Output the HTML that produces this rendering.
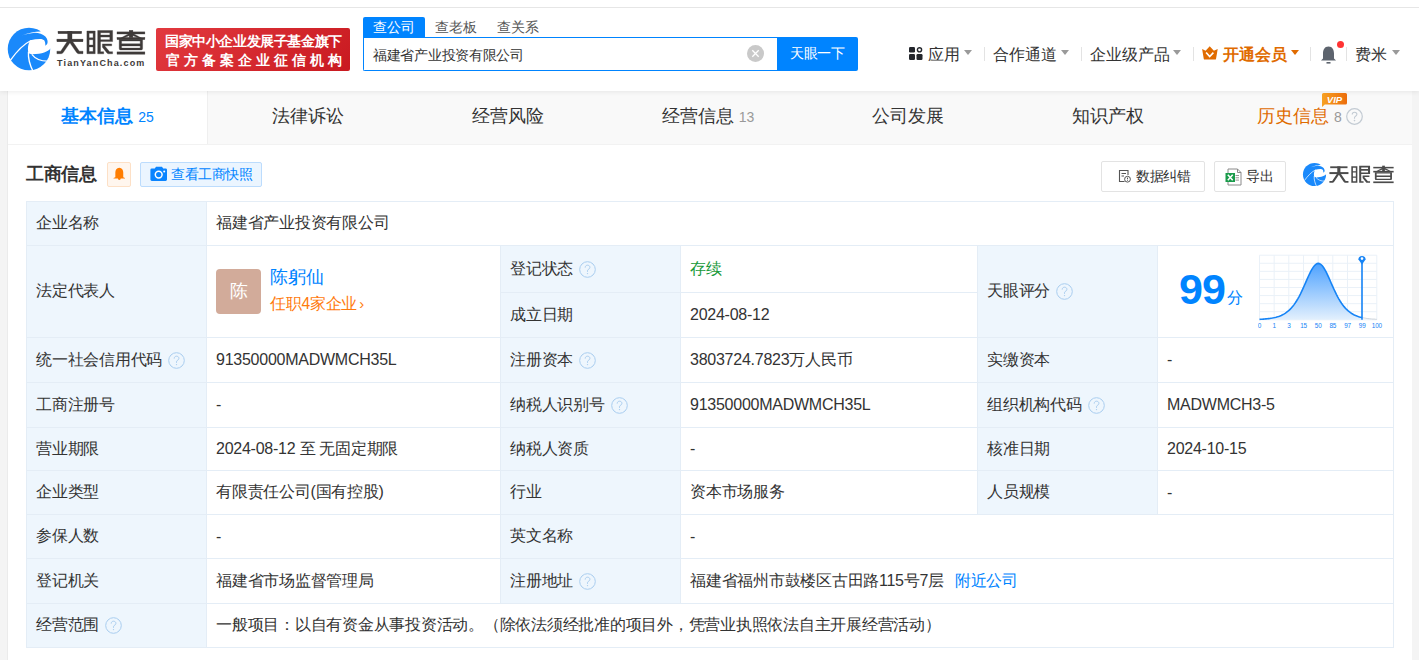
<!DOCTYPE html>
<html><head><meta charset="utf-8">
<style>
*{box-sizing:border-box;margin:0;padding:0}
html,body{width:1419px;height:660px;overflow:hidden}
body{position:relative;background:#f4f4f4;font-family:"Liberation Sans",sans-serif;color:#333;}
.abs{position:absolute}
#hdr{position:absolute;left:0;top:0;width:1419px;height:91px;background:#fff;box-shadow:0 1px 5px rgba(0,0,0,.08);z-index:2}
#topline{position:absolute;left:0;top:7px;width:1419px;height:1px;background:#e6e6e6}
.brand{position:absolute;left:56px;top:25px;font-size:27px;font-weight:700;color:#3e3a39;letter-spacing:3px;line-height:32px;white-space:nowrap}
.brand2{position:absolute;left:57px;top:57px;font-size:9px;font-weight:700;color:#3e3a39;letter-spacing:1.15px;line-height:12px;white-space:nowrap}
.badge{position:absolute;left:156px;top:28px;width:194px;height:43px;border-radius:2px;background:linear-gradient(135deg,#e2393f,#c91a20);color:#fff}
.badge .l1{position:absolute;left:9px;top:4.5px;font-size:14px;font-weight:700;letter-spacing:-0.4px;line-height:17px;white-space:nowrap}
.badge .l2{position:absolute;left:10px;top:24px;font-size:14px;font-weight:700;line-height:17px;white-space:nowrap;letter-spacing:3.95px}
.stab{position:absolute;top:17px;height:20px;font-size:14px;line-height:20px;color:#555;white-space:nowrap}
.stab.on{left:363px;width:62px;background:#0084ff;color:#fff;text-align:center;border-radius:2px 2px 0 0}
.sinput{position:absolute;left:363px;top:37px;width:415px;height:34px;border:1px solid #0084ff;border-right:none;border-radius:0 0 0 2px;background:#fff}
.sinput span{position:absolute;left:9px;top:7px;font-size:14px;letter-spacing:-0.3px;line-height:20px;color:#333;white-space:nowrap}
.sclear{position:absolute;left:747px;top:45px;width:17px;height:17px;border-radius:50%;background:#c9c9c9}
.sbtn{position:absolute;left:777px;top:37px;width:81px;height:34px;background:#0084ff;border-radius:0 2px 2px 0;color:#fff;font-size:14px;letter-spacing:-0.3px;line-height:33px;text-align:center}
.nav{position:absolute;top:44px;margin-left:1px;height:22px;font-size:16px;line-height:22px;color:#333;white-space:nowrap}
.caret{position:absolute;width:0;height:0;border-left:4.5px solid transparent;border-right:4.5px solid transparent;border-top:5px solid #9a9a9a}
.vsep{position:absolute;top:47px;width:1px;height:14px;background:#e3e3e3}

#card{position:absolute;left:8px;top:91px;width:1404px;height:569px;background:#fff;border-left:0;}
#cardline{position:absolute;left:7px;top:91px;width:1px;height:569px;background:#ebebeb}
#tabs{position:absolute;left:8px;top:91px;width:1404px;height:54px;background:#f9f9f9;border-bottom:1px solid #f2f2f2}
.tab{position:absolute;top:0;height:53px;width:200px;text-align:center;font-size:18px;line-height:51px;color:#333;white-space:nowrap}
.tab.on{left:0;width:200px;background:#fff;border-right:1px solid #efefef;color:#0084ff;font-weight:700}
.tab .n{font-size:14px;color:#999;font-weight:400;margin-left:5px}
.tab.on .n{color:#0084ff}

.sect{position:absolute;left:26px;top:161px;font-size:18px;letter-spacing:-0.4px;font-weight:700;line-height:26px;color:#333}
.bellbox{position:absolute;left:107px;top:162px;width:24px;height:25px;border:1px solid #fde0c6;background:#fff6ee;border-radius:2px}
.snap{position:absolute;left:140px;top:162px;width:122px;height:25px;border:1px solid #bcdcfd;background:#ebf5ff;border-radius:2px;color:#0084ff;font-size:14px;letter-spacing:-0.5px;line-height:23px;white-space:nowrap}
.snap span{position:absolute;left:30px;top:0}
.obtn{position:absolute;top:161px;height:31px;border:1px solid #e3e3e3;border-radius:2px;background:#fff;font-size:14px;letter-spacing:-0.4px;line-height:29px;color:#333;white-space:nowrap}

#grid{position:absolute;left:26px;top:201px;width:1368px;display:grid;border-left:1px solid #e4edf6;border-top:1px solid #e4edf6;
 grid-template-columns:180px 294px 180px 297px 180px 236px;
 grid-template-rows:44px 47px 45px 45px 45px 43px 44px 44px 45px 44px}
#grid>div{border-right:1px solid #e4edf6;border-bottom:1px solid #e4edf6;padding-left:9px;display:flex;align-items:center;font-size:16px;letter-spacing:-0.25px;color:#333;white-space:nowrap;position:relative}
#grid>div.k{background:#eef6fd}
.q{display:inline-block;width:17px;height:17px;margin-left:6px;position:relative;top:0}
.q svg{display:block}
</style></head><body>
<svg width="0" height="0" style="position:absolute"><defs><symbol id="logo" viewBox="0 0 660 660">
    <circle cx="330" cy="330" r="305" fill="#1a89fb"/>
    <g fill="#fff">
      <path d="M228,138 C290,118 350,105 415,98 C470,100 530,120 565,150 C595,180 605,230 590,260 C582,272 572,280 565,284 C565,262 562,222 548,205 C530,190 500,185 500,185 C450,184 400,190 350,205 C312,260 308,340 321,382 C330,396 350,406 377,406 C520,402 600,372 650,312 L700,312 L700,-10 L495,-10 L495,80 C420,80 320,100 228,138Z"/>
      <path d="M62,492 C150,370 250,262 358,208" stroke="#fff" stroke-width="19" fill="none"/>
      <path d="M322,370 C316,470 342,560 388,650" stroke="#fff" stroke-width="19" fill="none"/>
      <path d="M370,408 C425,478 505,508 610,505" stroke="#fff" stroke-width="17" fill="none"/>
    </g>
  </symbol><symbol id="brand" viewBox="0 0 92 28">
<rect x="3" y="3.2" width="23.7" height="2.5"/><rect x="1.9" y="11.1" width="26.1" height="2.7"/><rect x="12.7" y="3.2" width="4.3" height="10"/>
<path d="M12,13.8 L15.6,13.8 L8.2,24.6 Q7.4,25.7 6.2,25.7 L1.9,25.7 L1.9,23.2 L5.7,23.2Z"/>
<path d="M14.2,13.8 L17.8,13.8 L24.3,23.2 L28,23.2 L28,25.7 L23.5,25.7 Q22.3,25.7 21.6,24.6Z"/>
<path d="M31.9,3 H40.2 V25.7 H31.9Z M34.1,5.2 V9.8 H38.1 V5.2Z M34.1,11.7 V17 H38.1 V11.7Z M34.1,18.9 V23.5 H38.1 V18.9Z" fill-rule="evenodd"/>
<path d="M42.7,2.5 H57.6 V13.6 H45.5 V11.7 H54.8 V9.1 H45.5 V7 H54.8 V4.7 H45.5 V23.7 H48.7 V25.8 H42.7Z"/>
<path d="M47.4,15.9 H56.7 V17.8 H49.6 L54.6,23.7 H57.6 V25.8 H53.4 Q52.6,25.8 52,25.1 L47.4,19.2Z"/>
<rect x="74.2" y="2.3" width="3.7" height="7.3"/><rect x="62" y="3.9" width="27.9" height="2.1"/>
<path d="M74.6,5.2 L76.4,6.8 L66.2,11 L64,11Z"/><path d="M77.6,5.2 L75.8,6.8 L86,11 L88.2,11Z"/>
<rect x="62" y="9.4" width="27.9" height="2.2"/>
<path d="M64.2,11.2 H87.6 V20.4 Q87.6,21.9 86.1,21.9 H65.7 Q64.2,21.9 64.2,20.4Z M66.6,13 V15.8 H85.2 V13Z M66.6,17.9 V20.1 H85.2 V17.9Z" fill-rule="evenodd"/>
<rect x="62" y="23.9" width="27.9" height="2.3"/>
</symbol></defs></svg>
<div id="hdr">
  <div id="topline"></div>
  <svg class="abs" style="left:6px;top:26px" width="46" height="46"><use href="#logo"/></svg>
  <svg class="abs" style="left:55px;top:28px" width="92" height="28" fill="#3e3a39" stroke="#3e3a39" stroke-width="0.35"><use href="#brand"/></svg>
  <div class="brand2">TianYanCha.com</div>
  <div class="badge"><div class="l1">国家中小企业发展子基金旗下</div><div class="l2">官方备案企业征信机构</div></div>

  <div class="stab on">查公司</div>
  <div class="stab" style="left:435px">查老板</div>
  <div class="stab" style="left:497px">查关系</div>
  <div class="sinput"><span>福建省产业投资有限公司</span></div>
  <div class="sclear"></div>
  <svg class="abs" style="left:747px;top:45px" width="17" height="17" viewBox="0 0 17 17"><path d="M5.3,5.3 L11.7,11.7 M11.7,5.3 L5.3,11.7" stroke="#fff" stroke-width="1.3"/></svg>
  <div class="sbtn">天眼一下</div>

  <svg class="abs" style="left:909px;top:47px" width="14" height="13" viewBox="0 0 14 13">
    <rect x="0" y="0" width="6" height="5.5" rx="1.2" fill="#23262c"/>
    <circle cx="10.5" cy="2.8" r="2.1" fill="none" stroke="#23262c" stroke-width="1.4"/>
    <rect x="0" y="7" width="6" height="6" rx="1.2" fill="#23262c"/>
    <rect x="7.5" y="7" width="6" height="6" rx="1.2" fill="#23262c"/>
  </svg>
  <div class="nav" style="left:927px">应用</div>
  <div class="caret" style="left:964px;top:50px"></div>
  <div class="vsep" style="left:984px"></div>
  <div class="nav" style="left:992px">合作通道</div>
  <div class="caret" style="left:1061px;top:50px"></div>
  <div class="vsep" style="left:1081px"></div>
  <div class="nav" style="left:1089px">企业级产品</div>
  <div class="caret" style="left:1173px;top:50px"></div>
  <div class="vsep" style="left:1193px"></div>
  <svg class="abs" style="left:1202px;top:46px" width="16" height="14" viewBox="0 0 16 14"><path d="M0.1,3 L3.6,4.8 L7.7,0.3 L11.9,4.8 L15.7,3.1 L14,13 Q13.8,13.6 13.1,13.6 L2.6,13.6 Q1.9,13.6 1.8,13Z" fill="#e06b00"/><path d="M4.1,6.4 L7.7,10.6 L11.4,6.6" stroke="#fff" stroke-width="1.6" fill="none"/></svg>
  <div class="nav" style="left:1222px;color:#e06b00;font-weight:700">开通会员</div>
  <div class="caret" style="left:1291px;top:50px;border-top-color:#e06b00"></div>
  <div class="vsep" style="left:1310px"></div>
  <svg class="abs" style="left:1320px;top:46px" width="17" height="18" viewBox="0 0 17 18">
    <path d="M8.5,0.5 C4.5,0.5 3,4 3,7.5 L3,12.5 L1,14.5 L16,14.5 L14,12.5 L14,7.5 C14,4 12.5,0.5 8.5,0.5Z" fill="#5d646e"/>
    <rect x="6.5" y="16" width="4" height="1.6" fill="#5d646e"/>
  </svg>
  <div class="abs" style="left:1337px;top:41px;width:7px;height:7px;border-radius:50%;background:#f33"></div>
  <div class="vsep" style="left:1346px"></div>
  <div class="nav" style="left:1354px">费米</div>
  <div class="caret" style="left:1392px;top:50px"></div>
</div>

<div id="card"></div>
<div id="cardline"></div>
<div id="tabs">
  <div class="tab on">基本信息<span class="n">25</span></div>
  <div class="tab" style="left:200px">法律诉讼</div>
  <div class="tab" style="left:400px">经营风险</div>
  <div class="tab" style="left:600px">经营信息<span class="n">13</span></div>
  <div class="tab" style="left:800px">公司发展</div>
  <div class="tab" style="left:1000px">知识产权</div>
  <svg class="abs" style="left:1313px;top:1px;z-index:3" width="27" height="16" viewBox="0 0 27 16"><defs><linearGradient id="vg" x1="0" y1="0" x2="1" y2="0"><stop offset="0" stop-color="#f7a123"/><stop offset="1" stop-color="#ec6d0c"/></linearGradient></defs><path d="M2.5,1 L24.5,1 Q26,1 26,2.5 L26,11 Q26,12.6 24.5,12.6 L3.8,12.6 L1,15 L1,2.5 Q1,1 2.5,1Z" fill="url(#vg)"/><text x="13.5" y="10.6" text-anchor="middle" font-family="Liberation Sans,sans-serif" font-size="9.5" font-weight="700" font-style="italic" fill="#fff">VIP</text></svg>
  <div class="tab" style="left:1200px;color:#e06b00;padding-left:4px">历史信息<span class="n">8</span><span class="q" style="margin-left:4px;vertical-align:-3px"><svg width="17" height="17" viewBox="0 0 17 17"><circle cx="8.5" cy="8.5" r="7.8" fill="none" stroke="#c3cbd3" stroke-width="1.2"/><path d="M6.2,6.6 C6.2,5.1 7.2,4.2 8.5,4.2 C9.9,4.2 10.9,5.1 10.9,6.3 C10.9,7.6 9.9,8 9.1,8.6 C8.7,8.9 8.5,9.3 8.5,9.9 L8.5,10.8" fill="none" stroke="#c3cbd3" stroke-width="1.1"/><circle cx="8.5" cy="12.6" r="0.8" fill="#c3cbd3"/></svg></span></div>
</div>

<div class="sect">工商信息</div>
<div class="bellbox"></div>
<svg class="abs" style="left:112.6px;top:166.8px" width="12.6" height="13.5" viewBox="0 0 14 15"><path d="M7,0.8 C4,0.8 2.6,3.3 2.6,6 L2.6,11.3 L0.6,12.2 L0.6,12.8 L13.4,12.8 L13.4,12.2 L11.4,11.3 L11.4,6 C11.4,3.3 10,0.8 7,0.8Z M5.4,12.8 A1.6,1.6 0 0 0 8.6,12.8Z" fill="#ff7d00"/></svg>
<div class="snap"><span>查看工商快照</span></div>
<svg class="abs" style="left:150px;top:166px" width="18" height="16" viewBox="0 0 18 16"><path d="M1.8,2.4 L4.8,2.4 L6,0.8 L12,0.8 L13.2,2.4 L15.6,2.4 Q17,2.4 17,3.8 L17,13.6 Q17,15 15.6,15 L1.8,15 Q0.4,15 0.4,13.6 L0.4,3.8 Q0.4,2.4 1.8,2.4Z" fill="#0a84ff"/><circle cx="8.7" cy="8.6" r="3.4" fill="none" stroke="#fff" stroke-width="1.5"/><circle cx="14.2" cy="5.4" r="1" fill="#fff"/></svg>
<div class="obtn" style="left:1101px;width:104px"><span style="position:absolute;left:34px;top:0">数据纠错</span></div>
<svg class="abs" style="left:1118px;top:169px" width="14" height="14" viewBox="0 0 14 14"><path d="M6.5,12.5 L1.5,12.5 L1.5,1.5 L10,1.5 L10,6" fill="none" stroke="#555" stroke-width="1.1"/><path d="M3.5,4.5 H8 M3.5,7 H6" stroke="#555" stroke-width="1"/><circle cx="9.5" cy="10.2" r="2.9" fill="#fff" stroke="#555" stroke-width="1"/><path d="M9.5,8.6 V10.3 M9.5,11.2 V11.9" stroke="#555" stroke-width="1"/></svg>
<div class="obtn" style="left:1214px;width:72px"><span style="position:absolute;left:31px;top:0">导出</span></div>

<svg class="abs" style="left:1225px;top:168px" width="18" height="18" viewBox="0 0 18 18"><path d="M3,1 L12.5,1 L16,4.5 L16,17 L3,17Z" fill="#fff" stroke="#8a8a8a" stroke-width="1"/><path d="M12.5,1 L12.5,4.5 L16,4.5" fill="none" stroke="#8a8a8a" stroke-width="1"/><path d="M10.5,7.5 H14 M10.5,9.8 H14 M10.5,12.1 H14" stroke="#8a8a8a" stroke-width="0.9"/><rect x="0.5" y="5" width="9.5" height="9" fill="#1a9b4b"/><path d="M2.8,6.8 L7.7,12.2 M7.7,6.8 L2.8,12.2" stroke="#fff" stroke-width="1.5"/></svg>
<svg class="abs" style="left:1302px;top:162px" width="25" height="25"><use href="#logo"/></svg>
<svg class="abs" style="left:1327.5px;top:164px" width="67.2" height="20.44" fill="#4b4b4b"><use href="#brand"/></svg>
<div id="grid">
  <div class="k">企业名称</div>
  <div style="grid-column:span 5">福建省产业投资有限公司</div>

  <div class="k" style="grid-row:span 2">法定代表人</div>
  <div style="grid-row:span 2">
    <div class="abs" style="left:9px;top:23px;width:45px;height:45px;border-radius:4px;background:#d2ab9a;color:#fff;font-size:18px;line-height:45px;text-align:center">陈</div>
    <div class="abs" style="left:63px;top:18px;font-size:18px;line-height:26px;color:#0084ff">陈躬仙</div>
    <div class="abs" style="left:63px;top:48px;font-size:15.6px;line-height:20px;color:#ff7a0c">任职4家企业<span style="font-size:15px;margin-left:2px">›</span></div>
  </div>
  <div class="k">登记状态<span class="q"><svg width="17" height="17" viewBox="0 0 17 17"><circle cx="8.5" cy="8.5" r="7.8" fill="none" stroke="#a9cdef" stroke-width="1"/><path d="M6.2,6.6 C6.2,5.1 7.2,4.2 8.5,4.2 C9.9,4.2 10.9,5.1 10.9,6.3 C10.9,7.6 9.9,8 9.1,8.6 C8.7,8.9 8.5,9.3 8.5,9.9 L8.5,10.8" fill="none" stroke="#a9cdef" stroke-width="1"/><circle cx="8.5" cy="12.6" r="0.7" fill="#a9cdef"/></svg></span></div>
  <div style="color:#1a9a3a">存续</div>
  <div class="k" style="grid-row:span 2">天眼评分<span class="q"><svg width="17" height="17" viewBox="0 0 17 17"><circle cx="8.5" cy="8.5" r="7.8" fill="none" stroke="#a9cdef" stroke-width="1"/><path d="M6.2,6.6 C6.2,5.1 7.2,4.2 8.5,4.2 C9.9,4.2 10.9,5.1 10.9,6.3 C10.9,7.6 9.9,8 9.1,8.6 C8.7,8.9 8.5,9.3 8.5,9.9 L8.5,10.8" fill="none" stroke="#a9cdef" stroke-width="1"/><circle cx="8.5" cy="12.6" r="0.7" fill="#a9cdef"/></svg></span></div>
  <div style="grid-row:span 2">
    <div class="abs" style="left:21px;top:19px;font-size:43px;font-weight:700;line-height:48px;color:#0084ff;letter-spacing:-1px">99</div>
    <div class="abs" style="left:69px;top:42px;font-size:16px;line-height:20px;color:#0084ff">分</div>
<svg class="abs" style="left:100px;top:6px" width="130" height="82" viewBox="0 0 130 82">
<defs><linearGradient id="bg1" x1="0" y1="0" x2="0" y2="1"><stop offset="0" stop-color="#4ea2ff"/><stop offset="1" stop-color="#e3f0fd"/></linearGradient></defs>
<path d="M1.50,3.2 V67.8 M16.16,3.2 V67.8 M30.82,3.2 V67.8 M45.49,3.2 V67.8 M60.15,3.2 V67.8 M74.81,3.2 V67.8 M89.47,3.2 V67.8 M104.14,3.2 V67.8 M118.80,3.2 V67.8 M1.5,3.20 H118.8 M1.5,11.27 H118.8 M1.5,19.35 H118.8 M1.5,27.42 H118.8 M1.5,35.50 H118.8 M1.5,43.58 H118.8 M1.5,51.65 H118.8 M1.5,59.72 H118.8 M1.5,67.80 H118.8" stroke="#eaf1f8" stroke-width="1" fill="none"/>
<path d="M1.50,67.34 L2.78,67.27 L4.06,67.20 L5.34,67.11 L6.62,67.01 L7.91,66.90 L9.19,66.77 L10.47,66.62 L11.75,66.46 L13.03,66.26 L14.31,66.05 L15.59,65.80 L16.88,65.51 L18.16,65.19 L19.44,64.82 L20.72,64.41 L22.00,63.93 L23.28,63.40 L24.56,62.79 L25.84,62.11 L27.12,61.33 L28.41,60.46 L29.69,59.48 L30.97,58.39 L32.25,57.16 L33.53,55.80 L34.81,54.29 L36.09,52.62 L37.38,50.78 L38.66,48.78 L39.94,46.61 L41.22,44.27 L42.50,41.77 L43.78,39.12 L45.06,36.35 L46.34,33.49 L47.62,30.57 L48.91,27.65 L50.19,24.78 L51.47,22.02 L52.75,19.45 L54.03,17.12 L55.31,15.11 L56.59,13.49 L57.88,12.31 L59.16,11.60 L60.44,11.40 L61.72,11.71 L63.00,12.52 L64.28,13.81 L65.56,15.51 L66.84,17.59 L68.12,19.98 L69.41,22.60 L70.69,25.39 L71.97,28.28 L73.25,31.20 L74.53,34.11 L75.81,36.96 L77.09,39.70 L78.38,42.32 L79.66,44.78 L80.94,47.09 L82.22,49.23 L83.50,51.19 L84.78,52.99 L86.06,54.63 L87.34,56.10 L88.62,57.44 L89.91,58.63 L91.19,59.70 L92.47,60.66 L93.75,61.51 L95.03,62.26 L96.31,62.93 L97.59,63.52 L98.88,64.04 L100.16,64.50 L101.44,64.91 L102.72,65.26 L104.00,65.58 L104.0,67.8 L1.5,67.8 Z" fill="url(#bg1)"/>
<path d="M104.00,65.58 L104.74,65.74 L105.48,65.89 L106.22,66.03 L106.96,66.16 L107.70,66.28 L108.44,66.40 L109.18,66.50 L109.92,66.60 L110.66,66.69 L111.40,66.77 L112.14,66.85 L112.88,66.92 L113.62,66.98 L114.36,67.04 L115.10,67.10 L115.84,67.15 L116.58,67.20 L117.32,67.24 L118.06,67.29 L118.80,67.32" stroke="#d5dbe2" stroke-width="1.2" fill="none"/>
<path d="M1.50,67.34 L2.78,67.27 L4.06,67.20 L5.34,67.11 L6.62,67.01 L7.91,66.90 L9.19,66.77 L10.47,66.62 L11.75,66.46 L13.03,66.26 L14.31,66.05 L15.59,65.80 L16.88,65.51 L18.16,65.19 L19.44,64.82 L20.72,64.41 L22.00,63.93 L23.28,63.40 L24.56,62.79 L25.84,62.11 L27.12,61.33 L28.41,60.46 L29.69,59.48 L30.97,58.39 L32.25,57.16 L33.53,55.80 L34.81,54.29 L36.09,52.62 L37.38,50.78 L38.66,48.78 L39.94,46.61 L41.22,44.27 L42.50,41.77 L43.78,39.12 L45.06,36.35 L46.34,33.49 L47.62,30.57 L48.91,27.65 L50.19,24.78 L51.47,22.02 L52.75,19.45 L54.03,17.12 L55.31,15.11 L56.59,13.49 L57.88,12.31 L59.16,11.60 L60.44,11.40 L61.72,11.71 L63.00,12.52 L64.28,13.81 L65.56,15.51 L66.84,17.59 L68.12,19.98 L69.41,22.60 L70.69,25.39 L71.97,28.28 L73.25,31.20 L74.53,34.11 L75.81,36.96 L77.09,39.70 L78.38,42.32 L79.66,44.78 L80.94,47.09 L82.22,49.23 L83.50,51.19 L84.78,52.99 L86.06,54.63 L87.34,56.10 L88.62,57.44 L89.91,58.63 L91.19,59.70 L92.47,60.66 L93.75,61.51 L95.03,62.26 L96.31,62.93 L97.59,63.52 L98.88,64.04 L100.16,64.50 L101.44,64.91 L102.72,65.26 L104.00,65.58" stroke="#1684f6" stroke-width="1.6" fill="none"/>
<path d="M104.0,10 V67.8" stroke="#1684f6" stroke-width="1.6"/>
<path d="M100.4,7.5 A3.6,3.6 0 1 1 107.6,7.5 L104.0,12.5 Z" fill="#1684f6"/>
<circle cx="104.0" cy="6.6" r="1.3" fill="#fff"/>
<g font-family="Liberation Sans,sans-serif" font-size="6.4" fill="#1684f6"><text x="1.50" y="76" text-anchor="middle">0</text><text x="16.16" y="76" text-anchor="middle">1</text><text x="30.82" y="76" text-anchor="middle">3</text><text x="45.49" y="76" text-anchor="middle">15</text><text x="60.15" y="76" text-anchor="middle">50</text><text x="74.81" y="76" text-anchor="middle">85</text><text x="89.47" y="76" text-anchor="middle">97</text><text x="104.14" y="76" text-anchor="middle">99</text><text x="118.80" y="76" text-anchor="middle">100</text></g>
</svg>
  </div>
  <div class="k">成立日期</div>
  <div>2024-08-12</div>

  <div class="k">统一社会信用代码<span class="q"><svg width="17" height="17" viewBox="0 0 17 17"><circle cx="8.5" cy="8.5" r="7.8" fill="none" stroke="#a9cdef" stroke-width="1"/><path d="M6.2,6.6 C6.2,5.1 7.2,4.2 8.5,4.2 C9.9,4.2 10.9,5.1 10.9,6.3 C10.9,7.6 9.9,8 9.1,8.6 C8.7,8.9 8.5,9.3 8.5,9.9 L8.5,10.8" fill="none" stroke="#a9cdef" stroke-width="1"/><circle cx="8.5" cy="12.6" r="0.7" fill="#a9cdef"/></svg></span></div>
  <div>91350000MADWMCH35L</div>
  <div class="k">注册资本<span class="q"><svg width="17" height="17" viewBox="0 0 17 17"><circle cx="8.5" cy="8.5" r="7.8" fill="none" stroke="#a9cdef" stroke-width="1"/><path d="M6.2,6.6 C6.2,5.1 7.2,4.2 8.5,4.2 C9.9,4.2 10.9,5.1 10.9,6.3 C10.9,7.6 9.9,8 9.1,8.6 C8.7,8.9 8.5,9.3 8.5,9.9 L8.5,10.8" fill="none" stroke="#a9cdef" stroke-width="1"/><circle cx="8.5" cy="12.6" r="0.7" fill="#a9cdef"/></svg></span></div>
  <div>3803724.7823万人民币</div>
  <div class="k">实缴资本</div>
  <div>-</div>

  <div class="k">工商注册号</div>
  <div>-</div>
  <div class="k">纳税人识别号<span class="q"><svg width="17" height="17" viewBox="0 0 17 17"><circle cx="8.5" cy="8.5" r="7.8" fill="none" stroke="#a9cdef" stroke-width="1"/><path d="M6.2,6.6 C6.2,5.1 7.2,4.2 8.5,4.2 C9.9,4.2 10.9,5.1 10.9,6.3 C10.9,7.6 9.9,8 9.1,8.6 C8.7,8.9 8.5,9.3 8.5,9.9 L8.5,10.8" fill="none" stroke="#a9cdef" stroke-width="1"/><circle cx="8.5" cy="12.6" r="0.7" fill="#a9cdef"/></svg></span></div>
  <div>91350000MADWMCH35L</div>
  <div class="k">组织机构代码<span class="q"><svg width="17" height="17" viewBox="0 0 17 17"><circle cx="8.5" cy="8.5" r="7.8" fill="none" stroke="#a9cdef" stroke-width="1"/><path d="M6.2,6.6 C6.2,5.1 7.2,4.2 8.5,4.2 C9.9,4.2 10.9,5.1 10.9,6.3 C10.9,7.6 9.9,8 9.1,8.6 C8.7,8.9 8.5,9.3 8.5,9.9 L8.5,10.8" fill="none" stroke="#a9cdef" stroke-width="1"/><circle cx="8.5" cy="12.6" r="0.7" fill="#a9cdef"/></svg></span></div>
  <div>MADWMCH3-5</div>

  <div class="k">营业期限</div>
  <div>2024-08-12 至 无固定期限</div>
  <div class="k">纳税人资质</div>
  <div>-</div>
  <div class="k">核准日期</div>
  <div>2024-10-15</div>

  <div class="k">企业类型</div>
  <div>有限责任公司(国有控股)</div>
  <div class="k">行业</div>
  <div>资本市场服务</div>
  <div class="k">人员规模</div>
  <div>-</div>

  <div class="k">参保人数</div>
  <div>-</div>
  <div class="k">英文名称</div>
  <div style="grid-column:span 3">-</div>

  <div class="k">登记机关</div>
  <div>福建省市场监督管理局</div>
  <div class="k">注册地址<span class="q"><svg width="17" height="17" viewBox="0 0 17 17"><circle cx="8.5" cy="8.5" r="7.8" fill="none" stroke="#a9cdef" stroke-width="1"/><path d="M6.2,6.6 C6.2,5.1 7.2,4.2 8.5,4.2 C9.9,4.2 10.9,5.1 10.9,6.3 C10.9,7.6 9.9,8 9.1,8.6 C8.7,8.9 8.5,9.3 8.5,9.9 L8.5,10.8" fill="none" stroke="#a9cdef" stroke-width="1"/><circle cx="8.5" cy="12.6" r="0.7" fill="#a9cdef"/></svg></span></div>
  <div style="grid-column:span 3">福建省福州市鼓楼区古田路115号7层<span style="color:#0084ff;margin-left:11px">附近公司</span></div>

  <div class="k">经营范围<span class="q"><svg width="17" height="17" viewBox="0 0 17 17"><circle cx="8.5" cy="8.5" r="7.8" fill="none" stroke="#a9cdef" stroke-width="1"/><path d="M6.2,6.6 C6.2,5.1 7.2,4.2 8.5,4.2 C9.9,4.2 10.9,5.1 10.9,6.3 C10.9,7.6 9.9,8 9.1,8.6 C8.7,8.9 8.5,9.3 8.5,9.9 L8.5,10.8" fill="none" stroke="#a9cdef" stroke-width="1"/><circle cx="8.5" cy="12.6" r="0.7" fill="#a9cdef"/></svg></span></div>
  <div style="grid-column:span 5">一般项目：以自有资金从事投资活动。（除依法须经批准的项目外，凭营业执照依法自主开展经营活动）</div>
</div>
</body></html>
